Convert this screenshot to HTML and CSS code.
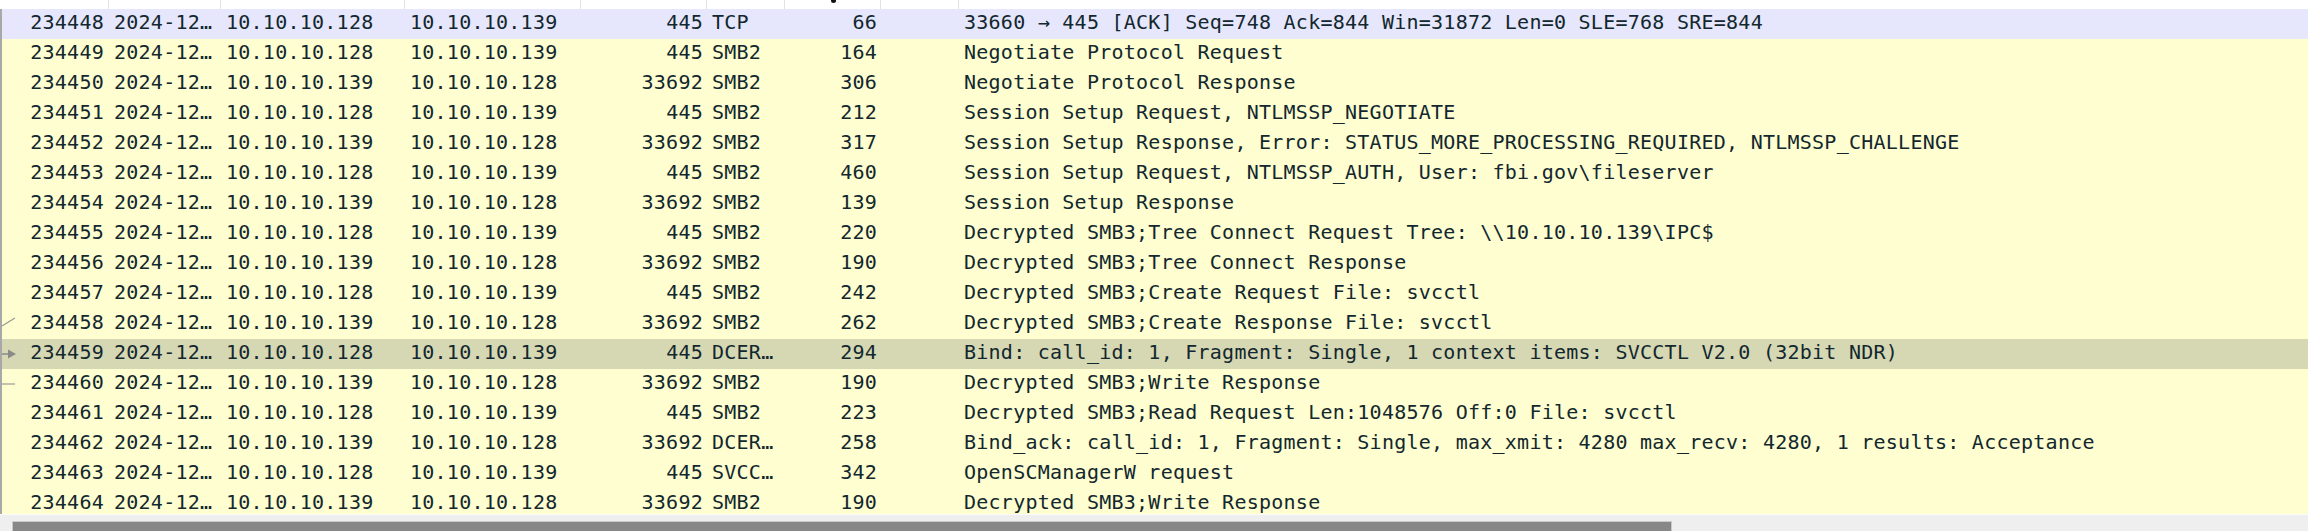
FILE: index.html
```html
<!DOCTYPE html>
<html>
<head>
<meta charset="utf-8">
<link rel="stylesheet" href="styles.css">
</head>
<body>
<div class="header">
  <div class="h"></div><div class="h"></div><div class="h"></div><div class="h"></div><div class="h"></div><div class="h"></div><div class="h h-len"><span class="sortmark"></span></div><div class="h"></div><div class="h"></div>
</div>
<div class="list">
  <div class="row tcp"><span class="c no"><span class="mk"></span>234448</span><span class="c">2024-12…</span><span class="c">10.10.10.128</span><span class="c">10.10.10.139</span><span class="c r">445</span><span class="c">TCP</span><span class="c r">66</span><span class="c"></span><span class="c">33660 → 445 [ACK] Seq=748 Ack=844 Win=31872 Len=0 SLE=768 SRE=844</span></div>
  <div class="row"><span class="c no"><span class="mk"></span>234449</span><span class="c">2024-12…</span><span class="c">10.10.10.128</span><span class="c">10.10.10.139</span><span class="c r">445</span><span class="c">SMB2</span><span class="c r">164</span><span class="c"></span><span class="c">Negotiate Protocol Request</span></div>
  <div class="row"><span class="c no"><span class="mk"></span>234450</span><span class="c">2024-12…</span><span class="c">10.10.10.139</span><span class="c">10.10.10.128</span><span class="c r">33692</span><span class="c">SMB2</span><span class="c r">306</span><span class="c"></span><span class="c">Negotiate Protocol Response</span></div>
  <div class="row"><span class="c no"><span class="mk"></span>234451</span><span class="c">2024-12…</span><span class="c">10.10.10.128</span><span class="c">10.10.10.139</span><span class="c r">445</span><span class="c">SMB2</span><span class="c r">212</span><span class="c"></span><span class="c">Session Setup Request, NTLMSSP_NEGOTIATE</span></div>
  <div class="row"><span class="c no"><span class="mk"></span>234452</span><span class="c">2024-12…</span><span class="c">10.10.10.139</span><span class="c">10.10.10.128</span><span class="c r">33692</span><span class="c">SMB2</span><span class="c r">317</span><span class="c"></span><span class="c">Session Setup Response, Error: STATUS_MORE_PROCESSING_REQUIRED, NTLMSSP_CHALLENGE</span></div>
  <div class="row"><span class="c no"><span class="mk"></span>234453</span><span class="c">2024-12…</span><span class="c">10.10.10.128</span><span class="c">10.10.10.139</span><span class="c r">445</span><span class="c">SMB2</span><span class="c r">460</span><span class="c"></span><span class="c">Session Setup Request, NTLMSSP_AUTH, User: fbi.gov\fileserver</span></div>
  <div class="row"><span class="c no"><span class="mk"></span>234454</span><span class="c">2024-12…</span><span class="c">10.10.10.139</span><span class="c">10.10.10.128</span><span class="c r">33692</span><span class="c">SMB2</span><span class="c r">139</span><span class="c"></span><span class="c">Session Setup Response</span></div>
  <div class="row"><span class="c no"><span class="mk"></span>234455</span><span class="c">2024-12…</span><span class="c">10.10.10.128</span><span class="c">10.10.10.139</span><span class="c r">445</span><span class="c">SMB2</span><span class="c r">220</span><span class="c"></span><span class="c">Decrypted SMB3;Tree Connect Request Tree: \\10.10.10.139\IPC$</span></div>
  <div class="row"><span class="c no"><span class="mk"></span>234456</span><span class="c">2024-12…</span><span class="c">10.10.10.139</span><span class="c">10.10.10.128</span><span class="c r">33692</span><span class="c">SMB2</span><span class="c r">190</span><span class="c"></span><span class="c">Decrypted SMB3;Tree Connect Response</span></div>
  <div class="row"><span class="c no"><span class="mk"></span>234457</span><span class="c">2024-12…</span><span class="c">10.10.10.128</span><span class="c">10.10.10.139</span><span class="c r">445</span><span class="c">SMB2</span><span class="c r">242</span><span class="c"></span><span class="c">Decrypted SMB3;Create Request File: svcctl</span></div>
  <div class="row"><span class="c no"><svg class="mk" width="15" height="30" viewBox="0 0 15 30"><line x1="0" y1="17" x2="13" y2="9" stroke="#9a9a9a" stroke-width="1.3"/></svg>234458</span><span class="c">2024-12…</span><span class="c">10.10.10.139</span><span class="c">10.10.10.128</span><span class="c r">33692</span><span class="c">SMB2</span><span class="c r">262</span><span class="c"></span><span class="c">Decrypted SMB3;Create Response File: svcctl</span></div>
  <div class="row sel"><span class="c no"><svg class="mk" width="15" height="30" viewBox="0 0 15 30"><line x1="0" y1="15" x2="8" y2="15" stroke="#8a8a8a" stroke-width="1.5"/><polygon points="6,10.5 14,15 6,19.5" fill="#8a8a8a"/></svg>234459</span><span class="c">2024-12…</span><span class="c">10.10.10.128</span><span class="c">10.10.10.139</span><span class="c r">445</span><span class="c">DCER…</span><span class="c r">294</span><span class="c"></span><span class="c">Bind: call_id: 1, Fragment: Single, 1 context items: SVCCTL V2.0 (32bit NDR)</span></div>
  <div class="row"><span class="c no"><svg class="mk" width="15" height="30" viewBox="0 0 15 30"><line x1="0" y1="15" x2="13" y2="15" stroke="#9a9a9a" stroke-width="1.2"/></svg>234460</span><span class="c">2024-12…</span><span class="c">10.10.10.139</span><span class="c">10.10.10.128</span><span class="c r">33692</span><span class="c">SMB2</span><span class="c r">190</span><span class="c"></span><span class="c">Decrypted SMB3;Write Response</span></div>
  <div class="row"><span class="c no"><span class="mk"></span>234461</span><span class="c">2024-12…</span><span class="c">10.10.10.128</span><span class="c">10.10.10.139</span><span class="c r">445</span><span class="c">SMB2</span><span class="c r">223</span><span class="c"></span><span class="c">Decrypted SMB3;Read Request Len:1048576 Off:0 File: svcctl</span></div>
  <div class="row"><span class="c no"><span class="mk"></span>234462</span><span class="c">2024-12…</span><span class="c">10.10.10.139</span><span class="c">10.10.10.128</span><span class="c r">33692</span><span class="c">DCER…</span><span class="c r">258</span><span class="c"></span><span class="c">Bind_ack: call_id: 1, Fragment: Single, max_xmit: 4280 max_recv: 4280, 1 results: Acceptance</span></div>
  <div class="row"><span class="c no"><span class="mk"></span>234463</span><span class="c">2024-12…</span><span class="c">10.10.10.128</span><span class="c">10.10.10.139</span><span class="c r">445</span><span class="c">SVCC…</span><span class="c r">342</span><span class="c"></span><span class="c">OpenSCManagerW request</span></div>
  <div class="row"><span class="c no"><span class="mk"></span>234464</span><span class="c">2024-12…</span><span class="c">10.10.10.139</span><span class="c">10.10.10.128</span><span class="c r">33692</span><span class="c">SMB2</span><span class="c r">190</span><span class="c"></span><span class="c">Decrypted SMB3;Write Response</span></div>
</div>
<div class="hscroll"><div class="thumb"></div></div>
</body>
</html>
```

FILE: styles.css
```css
html, body {
  margin: 0;
  padding: 0;
}
body {
  width: 2308px;
  height: 531px;
  overflow: hidden;
  background: #efefef;
  font-family: "DejaVu Sans Mono", "Liberation Mono", monospace;
  font-size: 20px;
  letter-spacing: 0.25px;
  color: #12272e;
}
.header {
  height: 9px;
  background: #ffffff;
  display: grid;
  grid-template-columns: 108px 112px 184px 176px 126px 78px 96px 78px 1fr;
  overflow: hidden;
}
.h {
  border-left: 1px solid #e2e2e2;
}
.h:first-child {
  border-left: none;
}
.h-len {
  display: flex;
  justify-content: center;
}
.sortmark {
  display: block;
  width: 5px;
  height: 3px;
  margin-left: 2px;
  background: #111;
  border-radius: 0 0 3px 3px;
}
.list {
  height: 505px;
  overflow: hidden;
  background: #fefed0;
  border-left: 2px solid #a8a8a8;
}
.row {
  display: grid;
  grid-template-columns: 106px 112px 184px 176px 126px 78px 96px 78px 1fr;
  height: 30px;
  line-height: 26px;
  background: #fefed0;
}
.row.tcp {
  background: #e6e6fc;
}
.row.sel {
  background: #d6d7b3;
}
.c {
  white-space: pre;
  overflow: hidden;
  padding: 0 5px 0 6px;
}
.c.r {
  text-align: right;
  padding: 0 3px 0 0;
}
.c.no {
  display: flex;
  justify-content: space-between;
  align-items: flex-start;
  padding: 0 4px 0 0;
}
.mk {
  display: block;
  width: 15px;
  height: 30px;
  margin-top: 0;
  flex: none;
}
.hscroll {
  height: 16px;
  border-top: 1px solid #fbfbfb;
  background: #efefef;
  padding: 6px 0 0 12px;
}
.thumb {
  width: 1660px;
  height: 14px;
  box-sizing: border-box;
  background: #878787;
  border: 1px solid #cacaca;
}
```
